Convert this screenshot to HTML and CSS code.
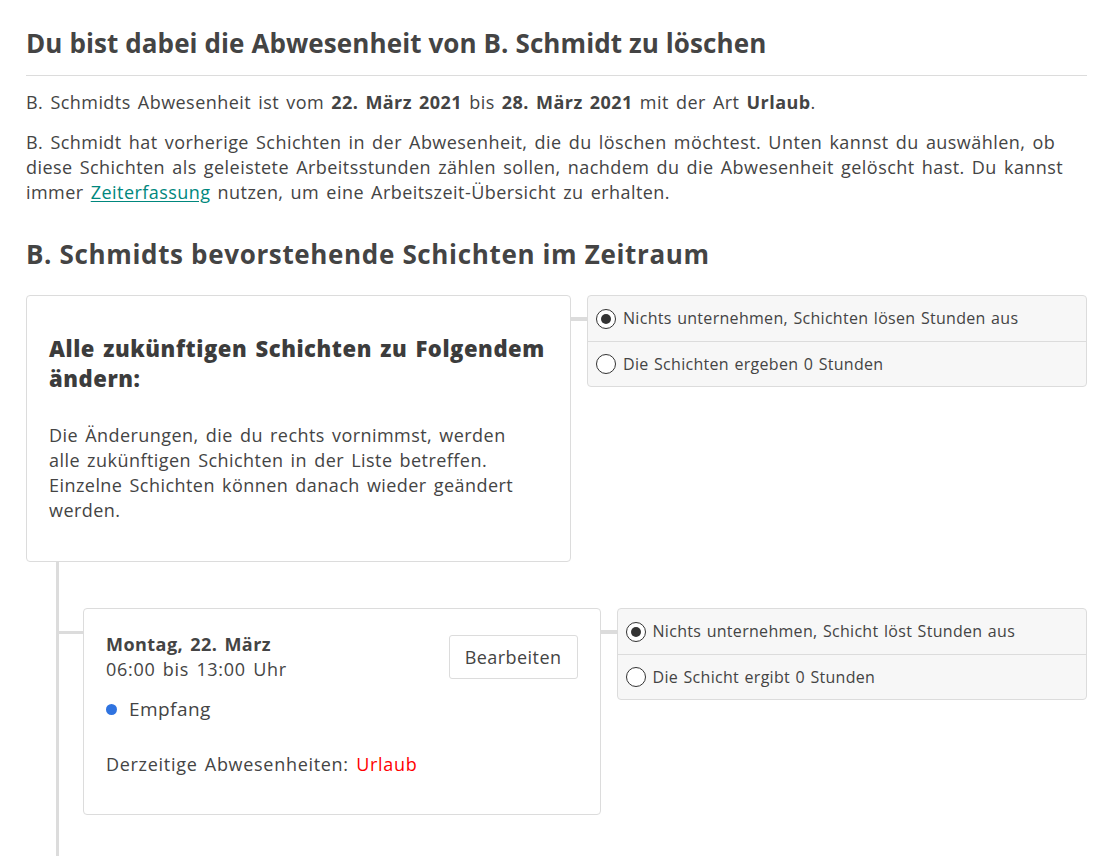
FILE: index.html
```html
<!DOCTYPE html>
<html lang="de">
<head>
<meta charset="utf-8">
<title>Abwesenheit löschen</title>
<link rel="stylesheet" href="styles.css">
</head>
<body>
<main class="page">
  <h1 class="title">Du bist dabei die Abwesenheit von B. Schmidt zu löschen</h1>
  <hr class="rule">
  <p class="text">B. Schmidts Abwesenheit ist vom <strong>22. März 2021</strong> bis <strong>28. März 2021</strong> mit der Art <strong>Urlaub</strong>.</p>
  <p class="text">B. Schmidt hat vorherige Schichten in der Abwesenheit, die du löschen möchtest. Unten kannst du auswählen, ob diese Schichten als geleistete Arbeitsstunden zählen sollen, nachdem du die Abwesenheit gelöscht hast. Du kannst immer <a class="link" href="#">Zeiterfassung</a> nutzen, um eine Arbeitszeit-Übersicht zu erhalten.</p>
  <h2 class="section-title">B. Schmidts bevorstehende Schichten im Zeitraum</h2>

  <div class="tree">
    <div class="row">
      <div class="card card-root">
        <h3 class="card-heading">Alle zukünftigen Schichten zu Folgendem ändern:</h3>
        <p class="card-text">Die Änderungen, die du rechts vornimmst, werden alle zukünftigen Schichten in der Liste betreffen. Einzelne Schichten können danach wieder geändert werden.</p>
      </div>
      <div class="connector"></div>
      <div class="options">
        <label class="option"><span class="radio checked"></span>Nichts unternehmen, Schichten lösen Stunden aus</label>
        <label class="option"><span class="radio"></span>Die Schichten ergeben 0 Stunden</label>
      </div>
    </div>

    <div class="children">
      <div class="row row-child">
        <div class="branch"></div>
        <div class="card card-shift">
          <div class="shift-head">
            <div class="shift-when">
              <div class="shift-date">Montag, 22. März</div>
              <div class="shift-time">06:00 bis 13:00 Uhr</div>
            </div>
            <button class="btn" type="button">Bearbeiten</button>
          </div>
          <div class="shift-pos"><span class="dot"></span>Empfang</div>
          <div class="shift-abs">Derzeitige Abwesenheiten: <span class="abs-type">Urlaub</span></div>
        </div>
        <div class="connector"></div>
        <div class="options options-child">
          <label class="option"><span class="radio checked"></span>Nichts unternehmen, Schicht löst Stunden aus</label>
          <label class="option"><span class="radio"></span>Die Schicht ergibt 0 Stunden</label>
        </div>
      </div>
    </div>
  </div>
</main>
</body>
</html>
```

FILE: styles.css
```css
* { box-sizing: border-box; }

html, body {
  margin: 0;
  padding: 0;
  background: #fff;
}

body {
  font-family: "Open Sans", "Noto Sans", "Liberation Sans", sans-serif;
  color: #444;
  font-size: 18px;
  line-height: 25px;
  letter-spacing: 0.45px;
  word-spacing: 2px;
}

.page {
  width: 1087px;
  padding: 0 0 0 26px;
  height: 856px;
  overflow: hidden;
}

.title {
  margin: 0;
  padding-top: 26px;
  font-size: 26px;
  line-height: 34px;
  font-weight: 700;
  letter-spacing: 0.1px;
  word-spacing: 0;
  color: #444;
}

.rule {
  border: 0;
  border-top: 1px solid #dcdcdc;
  margin: 15px 0 14px;
}

.text {
  margin: 0 0 15px;
}

.text strong { font-weight: 700; }

.link {
  color: #00877d;
  text-decoration: underline;
  text-underline-offset: 2px;
}

.section-title {
  margin: 32px 0 24px;
  font-size: 26px;
  line-height: 34px;
  font-weight: 700;
  letter-spacing: 0.65px;
  word-spacing: 0;
}

.row {
  display: flex;
  align-items: flex-start;
}

.card {
  background: #fff;
  border: 1px solid #dcdcdc;
  border-radius: 4px;
}

.card-root {
  width: 545px;
  height: 267px;
  padding: 37px 22px 0;
}

.card-heading {
  margin: 0 0 30px;
  font-size: 22px;
  line-height: 30px;
  font-weight: 800;
  letter-spacing: 0.55px;
  word-spacing: 2px;
  color: #3c3c3c;
}

.card-text {
  margin: 0;
  width: 490px;
}

.connector {
  width: 16px;
  height: 4px;
  margin-top: 22px;
  background: #dcdcdc;
  flex: none;
}

.options {
  width: 500px;
  background: #f7f7f7;
  border: 1px solid #dcdcdc;
  border-radius: 4px;
  font-size: 16px;
  letter-spacing: 0.3px;
  word-spacing: 1px;
}

.options-child { width: 471px; }

.option {
  display: flex;
  align-items: center;
  height: 45px;
  padding: 0 8px;
  gap: 7px;
  color: #444;
}

.option + .option {
  border-top: 1px solid #dcdcdc;
}

.radio {
  width: 20px;
  height: 20px;
  border: 1.5px solid #333;
  border-radius: 50%;
  background: #fff;
  flex: none;
  display: flex;
  align-items: center;
  justify-content: center;
}

.radio.checked::after {
  content: "";
  width: 10px;
  height: 10px;
  border-radius: 50%;
  background: #333;
}

.children {
  margin-left: 30px;
  border-left: 3px solid #dcdcdc;
  padding-top: 46px;
  height: 300px;
}

.branch {
  width: 24px;
  height: 3px;
  margin-top: 23px;
  background: #dcdcdc;
  flex: none;
}

.card-shift {
  width: 518px;
  height: 207px;
  padding: 23px 22px 0;
}

.shift-head {
  display: flex;
  justify-content: space-between;
  align-items: flex-start;
}

.shift-date {
  font-weight: 700;
}

.shift-time {
  letter-spacing: 0.7px;
}

.btn {
  font: inherit;
  letter-spacing: inherit;
  word-spacing: inherit;
  color: #444;
  background: #fff;
  border: 1px solid #dcdcdc;
  border-radius: 3px;
  height: 44px;
  padding: 0 15px;
  margin-top: 3px;
}

.shift-pos {
  display: flex;
  align-items: center;
  gap: 12px;
  margin-top: 15px;
  font-size: 19px;
}

.dot {
  width: 11px;
  height: 11px;
  border-radius: 50%;
  background: #2f73e0;
}

.shift-abs {
  margin-top: 30px;
  letter-spacing: 0.7px;
}

.abs-type { color: #f00; }
```
